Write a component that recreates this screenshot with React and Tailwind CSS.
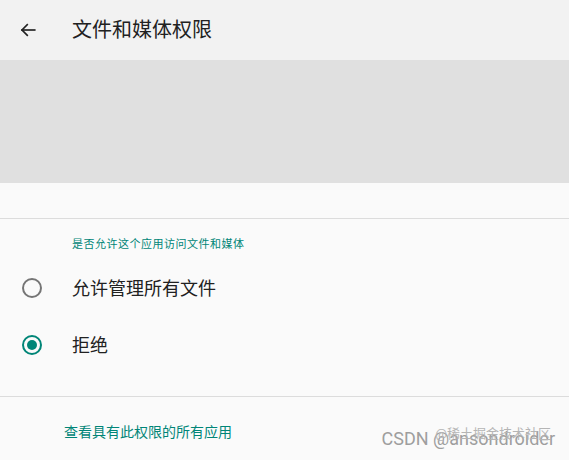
// 文件和媒体权限页面
const font = { fontFamily: '"Roboto", "Noto Sans CJK SC", sans-serif' }

function Radio({ checked }) {
  return (
    <svg width="22" height="22" viewBox="0 0 22 22" className="shrink-0">
      <circle cx="11" cy="11" r="9" fill="none" stroke={checked ? '#008577' : '#757575'} strokeWidth="2" />
      {checked && <circle cx="11" cy="11" r="5" fill="#008577" />}
    </svg>
  )
}

export default function App() {
  return (
    <div className="relative flex h-[460px] w-[569px] flex-col overflow-hidden bg-[#fafafa]" style={font}>
      {/* 顶栏 */}
      <div className="flex h-[60px] items-center bg-[#f2f2f2]">
        <div className="flex w-[72px] items-center pl-[19px]">
          <svg width="18" height="18" viewBox="0 0 24 24" fill="none" stroke="#212121" strokeWidth="2.2" strokeLinecap="square">
            <path d="M21 12H4" />
            <path d="M11 5l-7 7 7 7" />
          </svg>
        </div>
        <span className="text-[20px] text-[#212121]">文件和媒体权限</span>
      </div>

      <div className="h-[123px] bg-[#e0e0e0]" />
      <div className="h-[36px] border-b border-[#dcdcdc]" />

      <p className="pl-[72px] pt-[18px] text-[11px] tracking-[0.5px] text-[#008577]">是否允许这个应用访问文件和媒体</p>

      <div className="mt-[6px] flex flex-col">
        <div className="flex h-[57px] items-center">
          <div className="flex w-[72px] justify-center pr-[8px]"><Radio /></div>
          <span className="text-[18px] text-[#212121]">允许管理所有文件</span>
        </div>
        <div className="flex h-[57px] items-center">
          <div className="flex w-[72px] justify-center pr-[8px]"><Radio checked /></div>
          <span className="text-[18px] text-[#212121]">拒绝</span>
        </div>
      </div>

      <div className="mt-[22px] border-b border-[#dcdcdc]" />

      <p className="pl-[64px] pt-[25px] text-[14px] text-[#008577]">查看具有此权限的所有应用</p>

      {/* 水印 */}
      <div className="absolute bottom-[8px] right-[14px] text-[18px] text-[#9e9e9e]">
        <span className="relative">
          CSDN @ansondroider
          <span className="absolute right-[4px] top-[-4px] text-[13px] text-[#b5b5b5]">@稀土掘金技术社区</span>
        </span>
      </div>
    </div>
  )
}
